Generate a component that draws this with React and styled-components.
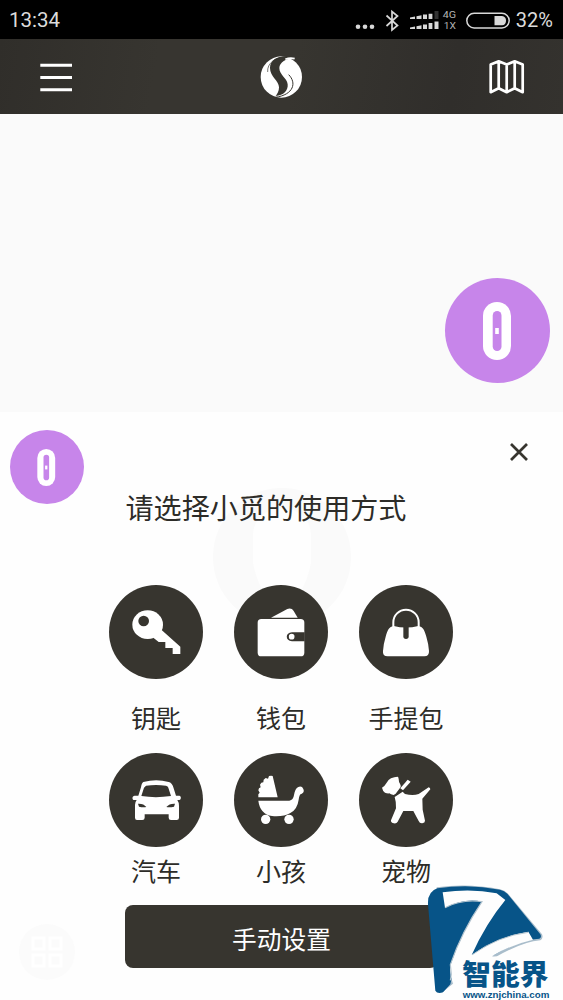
import React from "react";
import styled, { createGlobalStyle } from "styled-components";

const ink = "#37352f";
const purple = "#c785ea";
const brand = "#075488";
const sans = `Roboto, "Noto Sans CJK SC", sans-serif`;

const GlobalStyle = createGlobalStyle`
  *, *::before, *::after { box-sizing: border-box; }
  body { margin: 0; background: #fefefe; font-family: ${sans}; color: #2d2c28; }
  svg { display: block; flex: none; }
  button { border: 0; padding: 0; background: none; font: inherit; color: inherit; }
`;

const Screen = styled.main`
  position: relative;
  display: flex;
  flex-direction: column;
  width: 563px;
  height: 1000px;
  overflow: hidden;
`;

const StatusBar = styled.header`
  display: flex;
  align-items: center;
  justify-content: space-between;
  height: 39px;
  padding: 2px 10px 0 9px;
  background: #000;
  color: #dcdcdc;
  font-size: 20.5px;
  line-height: 39px;
`;

const StatusIcons = styled.div`
  display: flex;
  align-items: center;
  height: 37px;
`;

const Percent = styled.span`
  margin-left: 5px;
  font-size: 20px;
`;

const NavBar = styled.nav`
  display: flex;
  align-items: center;
  justify-content: space-between;
  height: 75px;
  padding: 0 38px;
  background: linear-gradient(100deg, #302e2a 0%, #373530 28%, #373530 52%, #302e2b 80%, #34322e 100%);
`;

const MapArea = styled.section`
  display: flex;
  justify-content: flex-end;
  height: 298px;
  padding: 164px 13px 0 0;
  background: #fafafa;
`;

const Avatar = styled.div`
  display: grid;
  place-items: center;
  flex: none;
  width: ${(p) => p.$size}px;
  height: ${(p) => p.$size}px;
  padding-right: 1px;
  border-radius: 50%;
  background: ${purple};
`;

const Sheet = styled.section`
  position: relative;
  display: flex;
  flex-direction: column;
  flex: 1;
  background: #fefefe;
`;

const SheetTop = styled.div`
  display: flex;
  justify-content: space-between;
  align-items: flex-start;
  height: 74px;
  padding: 18px 34px 0 10px;
`;

const CloseButton = styled.button`
  margin-top: 12px;
`;

const Watermark = styled.svg`
  position: absolute;
  left: 212px;
  top: 75px;
`;

const Title = styled.h1`
  position: relative;
  margin: 2px 0 0 125.5px;
  font-size: 28.1px;
  font-weight: 400;
  line-height: 44px;
  white-space: nowrap;
`;

const Grid = styled.div`
  position: relative;
  display: grid;
  grid-template-columns: repeat(3, 94px);
  grid-template-rows: 168px 152px;
  column-gap: 31px;
  margin: 53px 0 0 109px;
`;

const Option = styled.button`
  display: flex;
  flex-direction: column;
  align-items: center;
  justify-content: flex-start;
  gap: ${(p) => p.$gap}px;
  font-size: 25px;
  line-height: 32px;
  white-space: nowrap;
`;

const Disc = styled.span`
  display: block;
  width: 94px;
  height: 94px;
  border-radius: 50%;
  background: ${ink};
`;

const ManualButton = styled.button`
  width: 313px;
  height: 63px;
  margin-left: 125px;
  border-radius: 8px;
  background: ${ink};
  color: #fff;
  font-size: 24.7px;
  line-height: 63px;
  padding-top: 4px;
`;

const FloatingMenu = styled.div`
  position: absolute;
  left: 19px;
  bottom: 20px;
  display: grid;
  place-items: center;
  width: 56px;
  height: 56px;
  border-radius: 50%;
  background: #fbfbfb;
`;

const SiteLogo = styled.svg`
  position: absolute;
  left: 400px;
  top: 875px;
`;

const Pill = ({ w, h }) => (
  <svg width={w} height={h} viewBox="0 0 28 58">
    <rect width="28" height="58" rx="14" fill="#fff" />
    <rect x="9.7" y="9" width="8.8" height="40" rx="4.4" fill={purple} />
    <rect x="12.2" y="26" width="3.6" height="6" fill="#fff" />
  </svg>
);

const StatusGlyphs = () => (
  <svg width="156" height="39" viewBox="355 0 156 39">
    <g fill="#d8d8d8">
      <circle cx="358" cy="25.8" r="2.3" />
      <circle cx="365" cy="25.8" r="2.3" />
      <circle cx="372" cy="25.8" r="2.3" />
      <path d="M410 16.5l5-1V18h-5zM416.500 15.200l5-1V18h-5zM423 13.500h4V18h-4zM428.600 12.700h3.800V18h-3.800z" />
      <path fill="#333" d="M434.500 10h4v8h-4z" />
      <path d="M410 26.500l5-1V28h-5zM416.500 25.200l5-1V28h-5zM423 23.500h4V28h-4zM428.600 22h3.800v6h-3.800zM434.500 20.500h4V28h-4z" />
    </g>
    <path d="M386.500 14.500l11 10-5.500 4.500V10.500l5.500 4.500-11 10" fill="none" stroke="#d8d8d8" strokeWidth="1.7" />
    <g fill="#b4b4b4" fontFamily="Roboto, sans-serif" fontSize="8.8">
      <text x="442.800" y="17.200" textLength="13.400" lengthAdjust="spacingAndGlyphs">4G</text>
      <text x="443.800" y="28" textLength="12.200" lengthAdjust="spacingAndGlyphs">1X</text>
    </g>
    <rect x="466.800" y="12.300" width="42.400" height="14.600" rx="7.300" fill="none" stroke="#d8d8d8" strokeWidth="1.500" />
    <path d="M494.500 15H502a4.700 4.700 0 010 9.300h-7.500z" fill="#d8d8d8" />
  </svg>
);

const MenuIcon = () => (
  <svg width="36" height="30" viewBox="0 0 36 30">
    <path d="M2.300 3.300h31.700M2.300 15.500h31.700M2.300 27.700h31.700" stroke="#fff" strokeWidth="3" />
  </svg>
);

const BrandMark = () => (
  <svg width="46" height="46" viewBox="-2 0 138 138">
    <circle cx="68" cy="69" r="62" fill="#fff" />
    <path d="M108 11C70 0 34 12 34 42c0 26 27 38 27 58 0 12-5 20-10 26 24-1 38-17 36-35-2-19-25-28-25-49 0-17 20-30 46-31z" fill={ink} />
    <path d="M27 54C25 28 48 8 92 7" fill="none" stroke={ink} strokeWidth="2" />
    <path d="M90 62c24 24 16 60-40 68" fill="none" stroke={ink} strokeWidth="3" />
    <path d="M80 16q14-6 28-2" fill="none" stroke="#fff" strokeWidth="5" />
  </svg>
);

const MapIcon = () => (
  <svg width="37" height="36" viewBox="0 0 37 36">
    <path d="M2.700 5.500l8-3.200 8 3.200 8-3.200 8 3.200v27.700l-8-4-8 4-8-4-8 4zM10.700 2.300v27M18.700 5.500v27.500M26.700 2.300v27" fill="none" stroke="#fff" strokeWidth="2.700" strokeLinejoin="round" />
  </svg>
);

const Icon = ({ children }) => (
  <svg width="94" height="94" viewBox="0 0 282 282" fill="#fff">{children}</svg>
);

const options = [
  {
    label: "钥匙",
    art: (
      <>
        <path d="M157 134l57 51v22h-23v-18h-22v-18h-20l-16-13z" />
        <ellipse cx="116" cy="119" rx="46" ry="43" />
        <circle cx="104" cy="108" r="16" fill={ink} />
      </>
    ),
  },
  {
    label: "钱包",
    art: (
      <>
        <path d="M111 98l49-26q13-4 19 6l12 20z" />
        <rect x="71" y="102" width="140" height="112" rx="11" />
        <path d="M212 142h-38c-21 0-21 27 0 27h38z" fill={ink} />
        <circle cx="173" cy="155" r="8.500" />
      </>
    ),
  },
  {
    label: "手提包",
    art: (
      <>
        <path d="M103 127v-15a38 38 0 0176 0v15" fill="none" stroke="#fff" strokeWidth="6" />
        <path d="M104 123q37 9 74 0c14 3 18 11 24 32q7 23 8 43 1 16-14 16H86q-16 0-14-16 1-20 8-43c6-21 10-29 24-32z" />
        <path d="M133 122h16v32a8 8 0 01-16 0z" fill={ink} />
      </>
    ),
  },
  {
    label: "汽车",
    art: (
      <>
        <path fillRule="evenodd" d="M103 87q39-10 76 0 10 2 14 16l8 25h10c6 0 6 12 0 13h-6q5 7 5 18v35q0 7-7 7h-17q-7 0-7-7v-10h-72v10q0 7-7 7H84q-6 0-6-7v-38q0-9 5-15h-7c-8 0-7-13 1-13h11l8-25q2-13 7-16zm8 11-6 6-8 25q43 7 89 0l-8-25q-1-5-7-6-30-4-60 0z" />
        <path d="M87 152q17-1 25 10-10 2-22-1zM198 152q-17-1-26 10 10 2 23-1z" fill={ink} />
      </>
    ),
  },
  {
    label: "小孩",
    art: (
      <>
        <path d="M131 133H73v-9l4-5-4-7 2-6 5-3-2-8 4-6 6-1 1-8 6-5 7 2 3-8q7-2 11 0z" />
        <path d="M73 143h93q12-2 14-17 3-19 13-24a10 10 0 019 21q-6 0-8 17-4 29-25 40-21 12-55 9-36-6-41-46z" />
        <circle cx="95" cy="199" r="14" />
        <circle cx="165" cy="199" r="14" />
      </>
    ),
  },
  {
    label: "宠物",
    art: (
      <>
        <path d="M69 104q9-6 14-15 5-9 13-13 10-4 20-5 2 0 3 7 0 9 4 14 3 5 2 10l-15 20-6 4q-9-1-13-5-6 1-13-2-7-5-9-15z" />
        <path d="M124 106l22-26 9 6-23 26z" />
        <path d="M107 132l24-16 7 7q24 6 41 0l30-20q5 1 5 6l-24 28 1 33 7 33q0 7-8 8-8 1-11-7l-16-30h-30l-17 32q-3 6-11 5-10-1-9-9l15-36q1-19-4-34z" />
      </>
    ),
  },
];

export default function App() {
  return (
    <Screen>
      <GlobalStyle />
      <StatusBar>
        <span>13:34</span>
        <StatusIcons>
          <StatusGlyphs />
          <Percent>32%</Percent>
        </StatusIcons>
      </StatusBar>
      <NavBar>
        <MenuIcon />
        <BrandMark />
        <MapIcon />
      </NavBar>
      <MapArea>
        <Avatar $size={105}><Pill w={28} h={58} /></Avatar>
      </MapArea>
      <Sheet>
        <Watermark width="140" height="140" viewBox="0 0 140 140">
          <circle cx="70" cy="70" r="69" fill="#fafafa" />
          <path d="M41 49c0-37 58-37 58 0v27q-8 39-29 39T41 76z" fill="#fefefe" />
        </Watermark>
        <SheetTop>
          <Avatar $size={74}><Pill w={18.500} h={37} /></Avatar>
          <CloseButton aria-label="关闭">
            <svg width="20" height="20" viewBox="0 0 20 20">
              <path d="M2 2l16 16M18 2L2 18" stroke={ink} strokeWidth="2.700" />
            </svg>
          </CloseButton>
        </SheetTop>
        <Title>请选择小觅的使用方式</Title>
        <Grid>
          {options.map((o, i) => (
            <Option key={o.label} $gap={i < 3 ? 25 : 10}>
              <Disc><Icon>{o.art}</Icon></Disc>
              <span>{o.label}</span>
            </Option>
          ))}
        </Grid>
        <ManualButton>手动设置</ManualButton>
      </Sheet>
      <FloatingMenu>
        <svg width="32" height="32" viewBox="0 0 32 32" fill="none" stroke="#fff" strokeWidth="3">
          <path d="M2 2h11v11H2zM19 2h11v11H19zM2 19h11v11H2zM19 19h11v11H19z" />
        </svg>
      </FloatingMenu>
      <SiteLogo width="163" height="125" viewBox="0 0 489 375">
        <path d="M110 37q95-13 190 6 14 3 24 13l102 122q5 11-5 18-52 4-130 48l-104 8-24 48-4 26-32 26q-12 0-20-10z" fill="#a9bdcb" />
        <path d="M84 88q-2-38 28-48 95-15 188 4 13 3 22 12l99 122q5 9-3 13-58 3-135 48H190q-22 36-36 75l-3 14-22 24q-17 6-23-5z" fill={brand} />
        <path d="M128 52q85-13 162 3l26 20q-58 70-101 165 78-55 170-70l14 24q-62 14-121 48l-4 22H200l-41 62q-12-30-8-55 35-105 95-191-50-12-111 18z" fill="#fefefe" />
        <path d="M135 98q50-26 111-18-62 92-95 189l3 29-3 18" fill="none" stroke="#b3c4cf" strokeWidth="3.500" />
        <path d="M217 239q78-56 168-67" fill="none" stroke="#b9c8d1" strokeWidth="3" />
        <g fill={brand} fontWeight="900">
          <text x="187" y="329" fontFamily="'Noto Sans CJK SC', sans-serif" fontSize="86" textLength="258">智能界</text>
          <text x="188" y="370" fontFamily="'Liberation Sans', sans-serif" fontSize="25" fontWeight="700" textLength="260" lengthAdjust="spacingAndGlyphs">www.znjchina.com</text>
        </g>
      </SiteLogo>
    </Screen>
  );
}
